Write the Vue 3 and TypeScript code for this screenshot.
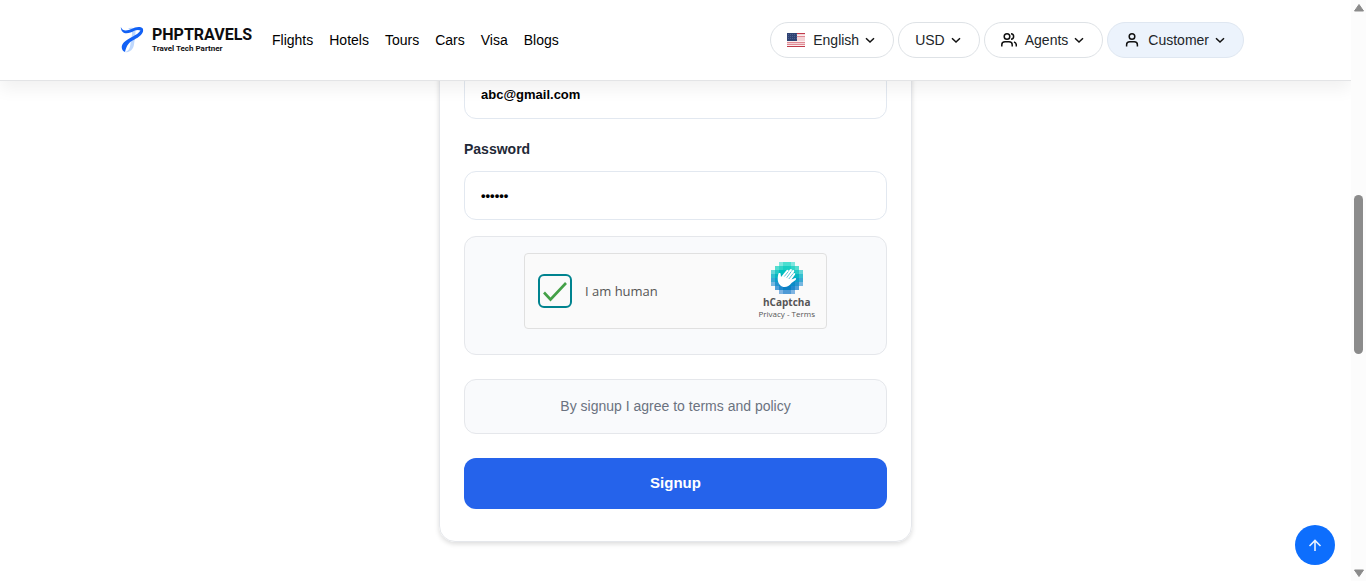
<script setup lang="ts">
import { ref } from 'vue'

const links: string[] = ['Flights', 'Hotels', 'Tours', 'Cars', 'Visa', 'Blogs']

interface Pill {
  label: string
  icon: 'flag' | 'users' | 'user' | ''
  active?: boolean
}
const pills: Pill[] = [
  { label: 'English', icon: 'flag' },
  { label: 'USD', icon: '' },
  { label: 'Agents', icon: 'users' },
  { label: 'Customer', icon: 'user', active: true },
]

const email = ref('abc@gmail.com')
const password = ref('secret')
const human = ref(true)

// Rows of the round pixel badge: start column, cell count, colours from left to right
const badge: { start: number; fills: string[] }[] = [
  { start: 2, fills: ['#7fe6df', '#4adfd0', '#4adfd0', '#7fe6df'] },
  { start: 1, fills: ['#55dccf', '#30d5c8', '#18cfc3', '#18cfc3', '#30d5c8', '#55dccf'] },
  { start: 0, fills: ['#66d6d8', '#25c9c6', '#00bfbf', '#00bfbf', '#00bfbf', '#00bfbf', '#25c9c6', '#66d6d8'] },
  { start: 0, fills: ['#35bfd0', '#08b5c2', '#00b0bf', '#00b0bf', '#00b0bf', '#00b0bf', '#08b5c2', '#35bfd0'] },
  { start: 0, fills: ['#3aa9d3', '#0b9fcb', '#0098c4', '#0098c4', '#0098c4', '#0098c4', '#0b9fcb', '#3aa9d3'] },
  { start: 0, fills: ['#76b7e0', '#2595cf', '#0a8bc8', '#008bc4', '#008bc4', '#0a8bc8', '#2595cf', '#76b7e0'] },
  { start: 1, fills: ['#4f9fd8', '#2189cd', '#0a80c4', '#0a80c4', '#2189cd', '#4f9fd8'] },
  { start: 2, fills: ['#7fb4e2', '#4e9ad6', '#4e9ad6', '#7fb4e2'] },
]
</script>

<template>
  <div class="page">
    <div class="view">
      <header class="top">
        <div class="bar">
          <a class="brand" href="#">
            <svg width="24" height="28" viewBox="0 0 24 28" aria-hidden="true">
              <path d="M8 2.500C12.500 .5 16 3 15.500 7L14 18.500C13.300 23.500 10 26.500 5 26.300C8.500 25 9.800 22.500 10.300 19L12 8C12.500 5 11 3.500 8 2.500Z" fill="#bfd8fd" />
              <path d="M.8 1C2.500 5.500 7 5 11.500 3C15.500 1 20 0 22.800 2.500C24.500 7 19.500 11 14.500 13.500C9 16 6.500 19.500 5 26C1.500 24.500 .3 20 4 16.300C8.500 12 18 9 20.500 4.500C17 3 14 5 10.500 6.500C5.500 8.500 1 7 .8 1Z" fill="#1261f5" />
            </svg>
            <span class="names">
              <span class="name">PHPTRAVELS</span>
              <span class="tag">Travel Tech Partner</span>
            </span>
          </a>
          <nav class="nav">
            <a v-for="l in links" :key="l" href="#">{{ l }}</a>
          </nav>
          <div class="pills">
            <button v-for="p in pills" :key="p.label" type="button" class="pill" :class="{ active: p.active }">
              <svg v-if="p.icon === 'flag'" class="lead" width="18" height="14" viewBox="0 0 18 14" aria-hidden="true">
                <rect width="18" height="14" fill="#f3d3d6" />
                <path d="M0 .5H18M0 13.500H18" stroke="#c03a4b" />
                <path d="M10 3.500H18M0 9.500H18M0 11.500H18" stroke="#e08a94" />
                <path d="M10 2.500H18M0 8.500H18M0 12.500H18" stroke="#fbeeee" />
                <rect width="10" height="8" fill="#2f4373" />
                <path d="M1 1.500H10M1 3.500H10M1 5.500H10" stroke="#4d5f8e" stroke-dasharray="1 1" />
              </svg>
              <svg v-else-if="p.icon === 'users'" class="lead line" width="16" height="16" viewBox="0 0 16 16" aria-hidden="true">
                <circle cx="6" cy="4.500" r="2.800" />
                <path d="M.8 14.500V12.800C.8 10.900 2.200 9.800 4 9.800H8C9.800 9.800 11.200 10.900 11.200 12.800V14.500M10 1.800C13.500 2 13.500 7 10 7.300M13 10C14.500 10.500 15.300 11.500 15.300 13V14.500" />
              </svg>
              <svg v-else-if="p.icon === 'user'" class="lead line" width="16" height="16" viewBox="0 0 16 16" aria-hidden="true">
                <circle cx="8" cy="4.500" r="2.800" />
                <path d="M2.600 14.500V12.800C2.600 10.900 4 9.800 5.800 9.800H10.200C12 9.800 13.400 10.900 13.400 12.800V14.500" />
              </svg>
              <span>{{ p.label }}</span>
              <svg class="chev line" width="14" height="14" viewBox="0 0 14 14" aria-hidden="true">
                <path d="M3 5.200L7 9L11 5.200" />
              </svg>
            </button>
          </div>
        </div>
      </header>

      <main class="main">
        <form class="card" @submit.prevent>
          <input v-model="email" class="field" type="email" aria-label="Email" />
          <label class="label" for="password">Password</label>
          <input id="password" v-model="password" class="field" type="password" />
          <div class="captcha">
            <div class="widget">
              <span class="tick">
                <input id="human" v-model="human" type="checkbox" />
                <svg v-if="human" width="26" height="22" viewBox="0 0 26 22" aria-hidden="true">
                  <path d="M2 12.500L8.500 19.500L24 3" fill="none" stroke="#43a047" stroke-width="2.600" />
                </svg>
              </span>
              <label class="human" for="human">I am human</label>
              <div class="mark">
                <svg width="32" height="32" viewBox="0 0 32 32" aria-hidden="true">
                  <g shape-rendering="crispEdges">
                    <template v-for="(row, y) in badge" :key="y">
                      <rect v-for="(f, x) in row.fills" :key="x" :x="(row.start + x) * 4" :y="y * 4" width="4" height="4" :fill="f" />
                    </template>
                  </g>
                  <path d="M9 23C6.500 20.500 6.300 16 7.300 12.200C7.600 10.500 9.800 10.800 9.700 12.500L10 15L15.500 8.300C16.800 7 18.300 8.200 17.200 9.700L18.700 7.700C20 6.200 21.700 7.500 20.500 9L20 9.700L21.300 8.500C22.700 7.200 24.200 8.700 23 10L22 11.500C23.500 10.200 25 11.500 23.800 13L20.500 17.500L23.500 16.200C25.200 15.600 25.700 17.300 24.300 18.200L20.500 21C17.500 25.500 12 26.500 9 23Z" fill="#fff" />
                  <path d="M13.300 14.500L17.300 9.600M15.700 15.700L20.200 9.600M17.800 17L22.200 11.500" fill="none" stroke="#15a7c3" stroke-width=".7" />
                </svg>
                <span class="hname">hCaptcha</span>
                <span class="legal"><a href="#">Privacy</a> - <a href="#">Terms</a></span>
              </div>
            </div>
          </div>
          <p class="terms">By signup I agree to terms and policy</p>
          <button class="submit" type="submit">Signup</button>
        </form>
      </main>

      <button class="totop" type="button" aria-label="Back to top">
        <svg width="16" height="16" viewBox="0 0 16 16" aria-hidden="true">
          <path d="M8 14V3.500M2.500 9L8 3.500L13.500 9" fill="none" stroke="#e9f1ff" stroke-width="1.600" />
        </svg>
      </button>
    </div>

    <div class="scroll" aria-hidden="true">
      <svg width="10" height="8" viewBox="0 0 10 8"><path d="M5 .5L9.500 7H.5Z" fill="#8b8b8b" stroke="#8b8b8b" stroke-linejoin="round" /></svg>
      <div class="track"><div class="thumb"></div></div>
      <svg width="10" height="8" viewBox="0 0 10 8"><path d="M5 7.500L9.500 1H.5Z" fill="#8b8b8b" stroke="#8b8b8b" stroke-linejoin="round" /></svg>
    </div>
  </div>
</template>

<style>
body {
  margin: 0;
  background: #fff;
}
</style>

<style scoped>
.page {
  display: flex;
  height: 100vh;
  overflow: hidden;
  font-family: "Liberation Sans", Arial, sans-serif;
  font-size: 14px;
  color: #000;
}
.page * {
  box-sizing: border-box;
}
a {
  color: inherit;
  text-decoration: none;
}
button,
input {
  font-family: inherit;
}
.view {
  flex: 1;
  min-width: 0;
  position: relative;
  overflow: hidden;
}
.top {
  position: relative;
  z-index: 2;
  background: #fff;
  border-bottom: 1px solid #e3e4e6;
  box-shadow: 0 8px 16px rgba(0, 0, 0, 0.06);
}
.bar {
  display: flex;
  align-items: center;
  max-width: 1137px;
  height: 80px;
  margin: 0 auto;
  padding-left: 13px;
}
.brand {
  display: flex;
  align-items: center;
  gap: 8px;
  width: 152px;
  font-family: Roboto, sans-serif;
  color: #0d0d0f;
}
.names {
  display: flex;
  flex-direction: column;
}
.name {
  font-size: 16px;
  line-height: 18px;
  font-weight: 700;
}
.tag {
  font-size: 8px;
  line-height: 10px;
  font-weight: 700;
}
.nav {
  display: flex;
  gap: 16px;
  flex: 1;
}
.pills {
  display: flex;
  gap: 4px;
}
.pill {
  display: flex;
  align-items: center;
  height: 36px;
  padding: 0 16px;
  border: 1px solid #dee2e6;
  border-radius: 18px;
  background: #fff;
  font-size: 14px;
  color: #212529;
}
.pill.active {
  background: #ecf3fc;
  border-color: #dfe7f1;
}
.lead {
  margin-right: 8px;
}
.chev {
  margin-left: 4px;
}
.line {
  fill: none;
  stroke: #111;
  stroke-width: 1.5;
}
.main {
  overflow: hidden;
  padding-bottom: 40px;
}
.card {
  display: flex;
  flex-direction: column;
  max-width: 473px;
  margin: -36px auto 0;
  padding: 24px 24px 32px;
  border: 1px solid #e5e7eb;
  border-radius: 16px;
  box-shadow: 0 2px 5px rgba(0, 0, 0, 0.14);
}
.field {
  width: 100%;
  height: 49px;
  padding: 0 16px;
  border: 1px solid #e2e8f0;
  border-radius: 12px;
  background: #fff;
  font-size: 13px;
  font-weight: 700;
  color: #000;
}
.label {
  margin: 20px 0 12px;
  line-height: 20px;
  font-weight: 700;
  color: #1f2937;
}
.captcha {
  display: flex;
  justify-content: center;
  align-items: flex-start;
  height: 119px;
  margin-top: 16px;
  padding-top: 16px;
  border: 1px solid #e5e7eb;
  border-radius: 12px;
  background: #f9fafc;
}
.widget {
  display: flex;
  align-items: center;
  width: 303px;
  height: 76px;
  padding: 0 11px 0 13px;
  border: 1px solid #e0e0e0;
  border-radius: 4px;
  background: #fafafa;
  font-family: "Open Sans", "Noto Sans", sans-serif;
  color: #555;
}
.tick {
  display: grid;
  place-items: center;
}
.tick > * {
  grid-area: 1 / 1;
}
.tick input {
  appearance: none;
  width: 34px;
  height: 34px;
  margin: 0;
  border: 2px solid #00838f;
  border-radius: 6px;
  background: #fafafa;
}
.tick svg {
  pointer-events: none;
}
.human {
  flex: 1;
  margin-left: 13px;
  font-size: 13px;
}
.mark {
  display: flex;
  flex-direction: column;
  align-items: center;
}
.hname {
  margin-top: 2px;
  font-size: 10px;
  line-height: 12px;
  font-weight: 700;
}
.legal {
  font-size: 8px;
  line-height: 12px;
}
.terms {
  margin: 24px 0;
  padding: 16px;
  border: 1px solid #e5e7eb;
  border-radius: 12px;
  background: #f9fafc;
  line-height: 21px;
  text-align: center;
  color: #6b7280;
}
.submit {
  height: 51px;
  padding: 0 16px 2px;
  border: 0;
  border-radius: 12px;
  background: #2563eb;
  font-size: 15px;
  font-weight: 700;
  color: #fff;
}
.totop {
  position: absolute;
  right: 16px;
  bottom: 16px;
  display: grid;
  place-items: center;
  width: 40px;
  height: 40px;
  padding: 0;
  border: 0;
  border-radius: 50%;
  background: #0d6efd;
}
.scroll {
  display: flex;
  flex-direction: column;
  align-items: center;
  width: 15px;
  padding: 4px 0;
  background: #fcfcfc;
}
.track {
  flex: 1;
  padding: 183px 0 0;
}
.thumb {
  width: 9px;
  height: 159px;
  border-radius: 5px;
  background: #8b8b8b;
}
</style>
